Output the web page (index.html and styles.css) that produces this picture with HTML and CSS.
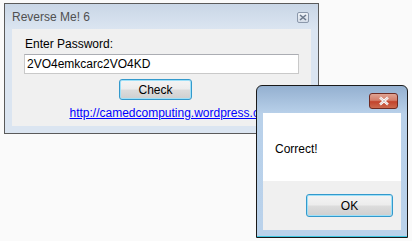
FILE: index.html
```html
<!DOCTYPE html>
<html lang="en">
<head>
    <meta charset="UTF-8">
    <title>Reverse Me! 6</title>
    <link rel="stylesheet" href="styles.css">
</head>
<body>
    <!-- Main crackme window (inactive) -->
    <div class="window main-window">
        <div class="titlebar">
            <span class="title">Reverse Me! 6</span>
            <span class="close-small">
                <svg width="8" height="7" viewBox="0 0 8 7"><path d="M1 1 L7 6 M7 1 L1 6" stroke="#6d7a8c" stroke-width="1.6"/></svg>
            </span>
        </div>
        <div class="client">
            <label class="label" for="pw">Enter Password:</label>
            <input class="textbox" id="pw" type="text" value="2VO4emkcarc2VO4KD">
            <div class="button-row">
                <button class="btn btn-check">Check</button>
            </div>
            <div class="link-row">
                <a class="link" href="#">http://camedcomputing.wordpress.com</a>
            </div>
        </div>
    </div>

    <!-- Message box (active) -->
    <div class="window msg-window">
        <div class="msg-titlebar">
            <span class="close-red">
                <svg width="14" height="10" viewBox="0 0 14 10"><path d="M3 1.5 L11 8.5 M11 1.5 L3 8.5" stroke="#fff" stroke-width="2.4"/><path d="M3 1.5 L11 8.5 M11 1.5 L3 8.5" stroke="#5b1f16" stroke-width="0.6" opacity="0.4"/></svg>
            </span>
        </div>
        <div class="msg-client">
            <div class="msg-body">Correct!</div>
            <div class="msg-footer">
                <button class="btn btn-ok">OK</button>
            </div>
        </div>
    </div>
</body>
</html>
```

FILE: styles.css
```css
/* Desktop */
body {
    margin: 0;
    width: 412px;
    height: 241px;
    background-color: #fafafa;
    font-family: "Liberation Sans", Arial, sans-serif;
    font-size: 12px;
    position: relative;
    overflow: hidden;
}

.window {
    position: absolute;
    box-sizing: border-box;
}

/* Main window */
.main-window {
    left: 4px;
    top: 3px;
    width: 315px;
    height: 131px;
    border: 1px solid #5a5a5a;
    background: linear-gradient(#c9d6e6, #dbe5f1 25px, #dbe5f1);
    padding: 0 7px 7px 7px;
    display: flex;
    flex-direction: column;
}

.titlebar {
    height: 25px;
    display: flex;
    align-items: center;
    justify-content: space-between;
}

.title {
    color: #505050;
    padding-top: 1px;
}

.close-small {
    width: 10px;
    height: 9px;
    border: 1px solid #8b98ab;
    border-radius: 2px;
    background: linear-gradient(#eef2f7, #d5dde8);
    display: flex;
    align-items: center;
    justify-content: center;
    margin-right: 2px;
    margin-top: 2px;
}

.client {
    flex: 1;
    background-color: #f0f0f0;
    padding: 8px 12px 0 12px;
    display: flex;
    flex-direction: column;
}

.label {
    color: #000;
    padding-left: 1px;
    height: 17px;
}

.textbox {
    box-sizing: border-box;
    width: 275px;
    height: 20px;
    border: 1px solid #c9c9c9;
    border-top-color: #abadb3;
    background-color: #fff;
    font-family: inherit;
    font-size: 12px;
    padding: 0 2px;
    margin: 0;
    color: #000;
}

.button-row {
    display: flex;
    justify-content: center;
    margin-top: 5px;
    padding-right: 12px;
}

/* Focused default push buttons */
.btn {
    box-sizing: border-box;
    font-family: inherit;
    font-size: 12px;
    color: #000;
    border: 1px solid #3399cc;
    border-radius: 3px;
    padding: 0;
    cursor: pointer;
    background: linear-gradient(#f4f4f4 0%, #ececec 48%, #dcdcdc 52%, #cfcfcf 100%);
    box-shadow: inset 0 0 0 1px #9ee0f8;
}

.btn-check {
    width: 73px;
    height: 21px;
}

.link-row {
    display: flex;
    justify-content: center;
    margin-top: 6px;
    padding-left: 22px;
}

.link {
    color: #0000ff;
    text-decoration: underline;
}

/* Message box */
.msg-window {
    left: 256px;
    top: 85px;
    width: 152px;
    height: 153px;
    border: 1px solid #1a1a1a;
    border-radius: 6px 6px 0 0;
    background: linear-gradient(#94b0d0, #b9d1ea 28px, #bad2eb);
    padding: 0 6px 7px 6px;
    display: flex;
    flex-direction: column;
    box-shadow: inset 0 -1px 0 #3ec6e0;
}

.msg-titlebar {
    height: 27px;
    display: flex;
    justify-content: flex-end;
    align-items: flex-start;
}

.close-red {
    width: 29px;
    height: 16px;
    margin-top: 7px;
    margin-right: 3px;
    box-sizing: border-box;
    border: 1px solid #6e2a22;
    border-radius: 3px;
    background: linear-gradient(#e0a392 0%, #d47e6a 45%, #c2432c 55%, #cc6a4f 100%);
    display: flex;
    align-items: center;
    justify-content: center;
}

.msg-client {
    flex: 1;
    background-color: #f0f0f0;
    display: flex;
    flex-direction: column;
}

.msg-body {
    background-color: #fff;
    height: 68px;
    box-sizing: border-box;
    padding: 29px 0 0 12px;
}

.msg-footer {
    flex: 1;
    display: flex;
    justify-content: flex-end;
    align-items: flex-start;
    padding: 13px 8px 0 0;
}

.btn-ok {
    width: 87px;
    height: 23px;
}
```
